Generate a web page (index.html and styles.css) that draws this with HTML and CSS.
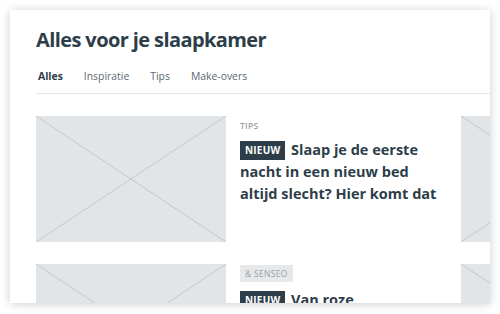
FILE: index.html
```html
<!doctype html>
<html lang="nl">
  <head>
    <meta charset="UTF-8" />
    <meta name="viewport" content="width=device-width, initial-scale=1.0" />
    <title>Alles voor je slaapkamer</title>
    <link rel="stylesheet" href="styles.css">
  </head>
  <body>
    <div class="card">
      <div class="card-header">
        <h1>Alles voor je slaapkamer</h1>
        <nav class="tabs">
          <a class="tab active" href="#">Alles</a>
          <a class="tab" href="#">Inspiratie</a>
          <a class="tab" href="#">Tips</a>
          <a class="tab" href="#">Make-overs</a>
        </nav>
      </div>

      <div class="articles">
        <div class="row">
          <div class="thumb">
            <svg viewBox="0 0 100 100" preserveAspectRatio="none">
              <line x1="0" y1="0" x2="100" y2="100" />
              <line x1="100" y1="0" x2="0" y2="100" />
            </svg>
          </div>
          <div class="article-text">
            <div class="label">Tips</div>
            <h2 class="headline"><span class="badge">Nieuw</span> Slaap je de eerste nacht in een nieuw bed altijd slecht? Hier komt dat</h2>
          </div>
          <div class="thumb">
            <svg viewBox="0 0 100 100" preserveAspectRatio="none">
              <line x1="0" y1="0" x2="100" y2="100" />
              <line x1="100" y1="0" x2="0" y2="100" />
            </svg>
          </div>
        </div>

        <div class="row">
          <div class="thumb">
            <svg viewBox="0 0 100 100" preserveAspectRatio="none">
              <line x1="0" y1="0" x2="100" y2="100" />
              <line x1="100" y1="0" x2="0" y2="100" />
            </svg>
          </div>
          <div class="article-text">
            <div class="label boxed">&amp; Senseo</div>
            <h2 class="headline"><span class="badge">Nieuw</span> Van roze</h2>
          </div>
          <div class="thumb">
            <svg viewBox="0 0 100 100" preserveAspectRatio="none">
              <line x1="0" y1="0" x2="100" y2="100" />
              <line x1="100" y1="0" x2="0" y2="100" />
            </svg>
          </div>
        </div>
      </div>
    </div>
  </body>
</html>
```

FILE: styles.css
```css
body {
  margin: 0;
  background-color: #ffffff;
  font-family: "Open Sans", "Noto Sans", Arial, sans-serif;
  color: #2d3e4a;
}
.card {
  margin: 10px;
  width: 480px;
  height: 293px;
  overflow: hidden;
  background-color: white;
  box-shadow: 0 1px 9px rgba(0, 0, 0, 0.2);
}
.card-header {
  padding: 15px 0 0 26px;
}
h1 {
  margin: 0;
  font-size: 20px;
  line-height: 30px;
  font-weight: 700;
  letter-spacing: -0.6px;
  color: #2d3e4a;
}
.tabs {
  display: flex;
  gap: 21px;
  margin-top: 13px;
  padding: 0 2px 9px;
  border-bottom: 1px solid #e3e5e7;
}
.tab {
  font-size: 10.4px;
  line-height: 16px;
  color: #5c6871;
  text-decoration: none;
}
.tab.active {
  font-weight: 700;
  color: #2d3e4a;
}
.articles {
  padding: 22px 0 0 26px;
}
.row {
  display: grid;
  grid-template-columns: 190px 207px 190px;
  gap: 14px;
  margin-bottom: 22px;
}
.thumb {
  height: 126px;
  background-color: #e2e5e8;
}
.thumb svg {
  display: block;
  width: 100%;
  height: 100%;
}
.thumb line {
  stroke: #c3c7cb;
  stroke-width: 1;
  vector-effect: non-scaling-stroke;
}
.label {
  margin-top: 4px;
  font-size: 8.5px;
  line-height: 12px;
  font-weight: 600;
  letter-spacing: 0.3px;
  text-transform: uppercase;
  color: #9aa1a7;
}
.label.boxed {
  width: fit-content;
  margin-top: 1px;
  padding: 2px 5px;
  line-height: 13px;
  font-weight: 400;
  background-color: #e6e8ea;
}
.headline {
  margin: 7px 0 0;
  font-size: 14.5px;
  line-height: 22px;
  font-weight: 700;
  color: #2d3e4a;
}
.badge {
  display: inline-block;
  padding: 0 5px;
  margin-right: 2px;
  font-size: 10px;
  line-height: 19px;
  letter-spacing: 0.2px;
  text-transform: uppercase;
  vertical-align: 1px;
  color: white;
  background-color: #2d3e4a;
}
```
